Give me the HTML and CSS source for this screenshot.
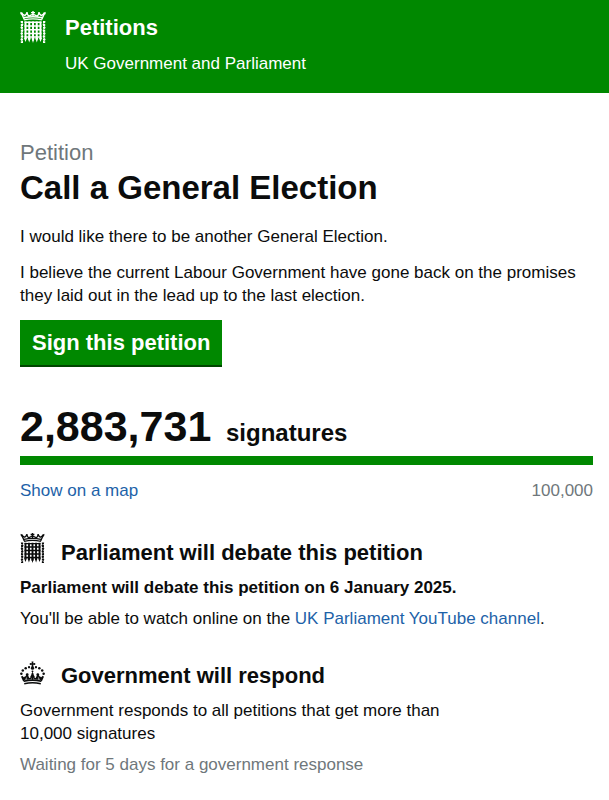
FILE: index.html
```html
<!DOCTYPE html>
<html lang="en">
<head>
    <meta charset="utf-8">
    <meta name="viewport" content="width=device-width, initial-scale=1">
    <title>Call a General Election - Petitions</title>
    <link rel="stylesheet" href="styles.css">
</head>
<body>
    <!-- Shared icon shapes -->
    <svg class="icon-defs" aria-hidden="true">
        <symbol id="portcullis" viewBox="0 0 26 32">
            <g fill="none" stroke="currentColor">
                <path stroke-width="1.4" d="M13 0v5M11 1.6h4M4 8.9q9-2 18 0M4 6.8q9-2 18 0"/>
                <path stroke-width="1.4" d="M4.3 8.5L1.6 2.5l3.2 2 2-2 2 2.6L13 3.2l4.2 1.9 2-2.6 2 2 3.2-2-2.7 6"/>
                <path stroke-width="2" d="M5.5 10.5v17M9.25 10.5v18M13 10.5v19M16.75 10.5v18M20.5 10.5v17"/>
                <path stroke-width="1.5" d="M4.5 11.3h17M4.5 15h17M4.5 18.7h17M4.5 22.4h17M4.5 26.1h17"/>
                <path stroke-width="2.2" stroke-dasharray="2 0.9" d="M1.9 10v22M24.1 10v22"/>
                <path stroke-width="0.8" d="M1 10.5l1.8 3-1.8 3 1.8 3-1.8 3 1.8 3-1.8 3 1.8 2.5M25 10.5l-1.8 3 1.8 3-1.8 3 1.8 3-1.8 3 1.8 3-1.8 2.5"/>
            </g>
            <path fill="currentColor" d="M4 27h3l-1.5 4zM7.7 27h3l-1.5 4.5zM11.5 27h3L13 32zM15.3 27h3l-1.5 4.5zM19 27h3l-1.5 4z"/>
            <g fill="currentColor">
                <circle cx="1.6" cy="2.4" r="1.2"/>
                <circle cx="7" cy="2.2" r="1.1"/>
                <circle cx="19" cy="2.2" r="1.1"/>
                <circle cx="24.4" cy="2.4" r="1.2"/>
            </g>
        </symbol>
        <symbol id="crown" viewBox="0 0 26 24">
            <g fill="currentColor">
                <path d="M12 0h2l-.3 1.8 2.1-.3v2.2l-2.1-.3.5 3h-2.4l.5-3-2.1.3V1.5l2.1.3z"/>
                <circle cx="13" cy="7" r="1.7"/>
                <circle cx="9.4" cy="6" r="1.2"/>
                <circle cx="5.9" cy="7" r="1.3"/>
                <circle cx="2.9" cy="9.4" r="1.3"/>
                <circle cx="1.4" cy="12.8" r="1.3"/>
                <circle cx="16.6" cy="6" r="1.2"/>
                <circle cx="20.1" cy="7" r="1.3"/>
                <circle cx="23.1" cy="9.4" r="1.3"/>
                <circle cx="24.6" cy="12.8" r="1.3"/>
                <circle cx="13" cy="10.3" r="1"/>
                <circle cx="7.5" cy="13.6" r="1.4"/>
                <circle cx="18.5" cy="13.6" r="1.4"/>
            </g>
            <g fill="none" stroke="currentColor">
                <path stroke-width="1.5" d="M4 20.5L1.8 15.5l2.8 2.6 2.9-4 1.6 4 2.2-.6L13 12.6l1.7 4.9 2.2.6 1.6-4 2.9 4 2.8-2.6-2.2 5"/>
                <path stroke-width="1.5" d="M5 16v3.5M21 16v3.5M11 15.5h4M13 12v7M7.5 15v4M18.5 15v4"/>
                <path stroke-width="1.8" d="M4 20.6q9-2.4 18 0"/>
                <path stroke-width="1.6" d="M4.4 23.1q8.6-1.9 17.2 0"/>
            </g>
        </symbol>
    </svg>

    <header class="header">
        <svg class="logo" aria-hidden="true"><use href="#portcullis"/></svg>
        <div class="header-text">
            <a href="#" class="site-name">Petitions</a>
            <span class="tagline">UK Government and Parliament</span>
        </div>
    </header>

    <main class="content">
        <h1 class="page-title">
            <span class="page-type">Petition</span>
            Call a General Election
        </h1>
        <p class="intro">I would like there to be another General Election.</p>
        <p class="details">I believe the current Labour Government have gone back on the promises they laid out in the lead up to the last election.</p>
        <button type="button" class="sign-button">Sign this petition</button>

        <section class="signatures">
            <p class="count"><span class="count-number">2,883,731</span> signatures</p>
            <div class="graph"></div>
            <div class="graph-footer">
                <a href="#">Show on a map</a>
                <span class="goal">100,000</span>
            </div>
        </section>

        <section class="threshold">
            <h2><svg class="icon-portcullis" aria-hidden="true"><use href="#portcullis"/></svg>Parliament will debate this petition</h2>
            <p><strong>Parliament will debate this petition on 6 January 2025.</strong></p>
            <p>You'll be able to watch online on the <a href="#">UK Parliament YouTube channel</a>.</p>
        </section>

        <section class="threshold">
            <h2><svg class="icon-crown" aria-hidden="true"><use href="#crown"/></svg>Government will respond</h2>
            <p class="narrow">Government responds to all petitions that get more than 10,000 signatures</p>
            <p class="waiting">Waiting for 5 days for a government response</p>
        </section>
    </main>
</body>
</html>
```
FILE: styles.css
```css
body {
    font-family: "Liberation Sans", Arial, sans-serif;
    font-size: 17px;
    line-height: 23px;
    color: #0b0c0c;
    margin: 0;
    background-color: #fff;
}
a {
    color: #1d62a8;
    text-decoration: none;
}
a:hover {
    text-decoration: underline;
}
h1, h2, p {
    margin: 0;
}
.icon-defs {
    display: none;
}
.header {
    display: flex;
    align-items: flex-start;
    gap: 19px;
    padding: 11px 20px 18px;
    background-color: #008800;
    color: #fff;
}
.logo {
    flex: none;
    width: 26px;
    height: 32px;
}
.header-text {
    padding-top: 4px;
}
.site-name {
    display: block;
    margin-bottom: 12px;
    color: #fff;
    font-size: 22px;
    font-weight: bold;
    line-height: 25px;
}
.tagline {
    display: block;
}
.content {
    padding: 46px 16px 20px 20px;
}
.page-title {
    font-size: 33px;
    line-height: 42px;
    margin-bottom: 16px;
}
.page-type {
    display: block;
    color: #6f777b;
    font-size: 22px;
    font-weight: normal;
    line-height: 28px;
}
.intro {
    margin-bottom: 13px;
}
.details {
    margin-bottom: 13px;
}
.sign-button {
    display: block;
    padding: 10px 12px;
    border: 0;
    border-bottom: 2px solid #004600;
    background-color: #008800;
    color: #fff;
    font-family: inherit;
    font-size: 22px;
    font-weight: bold;
    line-height: 25px;
    cursor: pointer;
}
.signatures {
    margin-top: 36px;
}
.count {
    font-size: 24px;
    font-weight: bold;
    line-height: 46px;
}
.count-number {
    margin-right: 8px;
    font-size: 43px;
}
.graph {
    height: 9px;
    margin-bottom: 14px;
    background-color: #008800;
}
.graph-footer {
    display: flex;
    justify-content: space-between;
}
.goal, .waiting {
    color: #6f777b;
}
.threshold {
    margin-top: 31px;
}
.threshold h2 {
    display: flex;
    align-items: flex-end;
    gap: 16px;
    margin-bottom: 11px;
    font-size: 22px;
    line-height: 25px;
}
.threshold p {
    margin-bottom: 8px;
}
.icon-portcullis {
    flex: none;
    width: 25px;
    height: 30px;
    margin-bottom: 2px;
}
.icon-crown {
    flex: none;
    width: 25px;
    height: 24px;
    margin-bottom: 3px;
}
.narrow {
    max-width: 450px;
}
```
